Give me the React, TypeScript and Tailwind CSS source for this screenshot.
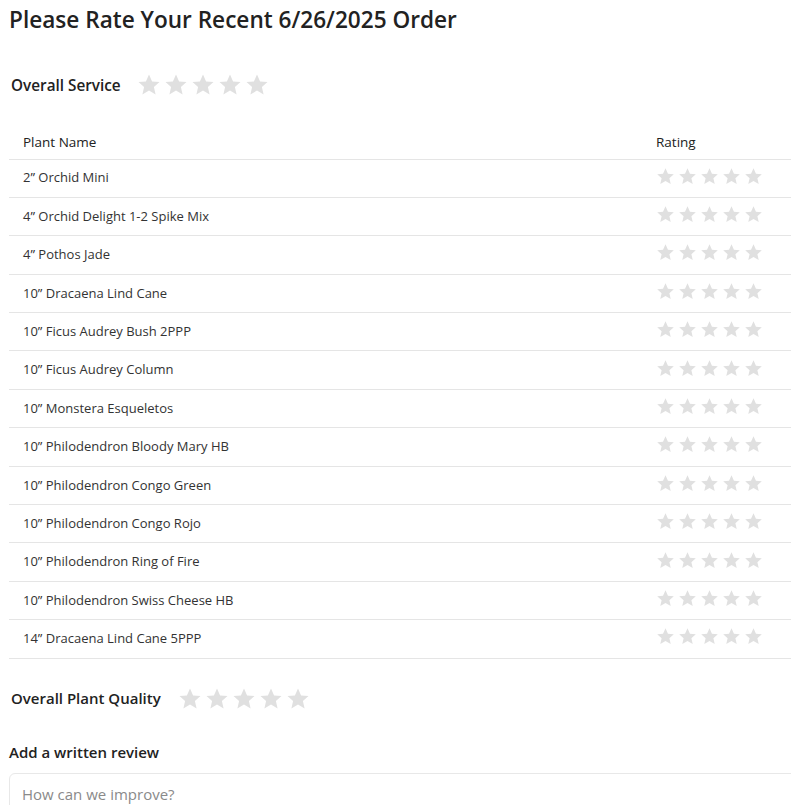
import React from "react";

const plants = [
  "2\u201D Orchid Mini",
  "4\u201D Orchid Delight 1-2 Spike Mix",
  "4\u201D Pothos Jade",
  "10\u201D Dracaena Lind Cane",
  "10\u201D Ficus Audrey Bush 2PPP",
  "10\u201D Ficus Audrey Column",
  "10\u201D Monstera Esqueletos",
  "10\u201D Philodendron Bloody Mary HB",
  "10\u201D Philodendron Congo Green",
  "10\u201D Philodendron Congo Rojo",
  "10\u201D Philodendron Ring of Fire",
  "10\u201D Philodendron Swiss Cheese HB",
  "14\u201D Dracaena Lind Cane 5PPP",
];

function Star({ size }: { size: number }) {
  return (
    <svg width={size} height={size} viewBox="0 0 24 24" className="block">
      <path
        d="M12 1.5l3.1 6.9 7.4.7-5.6 5 1.7 7.4L12 17.6l-6.6 3.9 1.7-7.4-5.6-5 7.4-.7z"
        fill="#e0e0e0"
      />
    </svg>
  );
}

export default function App() {
  return (
    <div
      className="bg-white text-[#222] pl-[9px] overflow-hidden w-[791px] h-[805px]"
      style={{ fontFamily: "'Open Sans', 'Liberation Sans', sans-serif" }}
    >
      <h1 className="text-[22.6px] font-semibold leading-[32px] pt-[4px] text-[#222]">
        Please Rate Your Recent 6/26/2025 Order
      </h1>

      <div className="flex items-center mt-[34px] pl-[2px] h-[30px]">
        <span className="text-[15.3px] font-semibold w-[126px]">Overall Service</span>
        <div className="flex gap-[3px]">
          {[0, 1, 2, 3, 4].map((i) => (
            <Star key={i} size={24} />
          ))}
        </div>
      </div>

      <table className="w-[782px] mt-[28px] border-collapse text-[13px]">
        <thead>
          <tr className="border-b border-[#e5e5e5]">
            <th className="text-left font-medium pl-[14px] h-[31px] pb-[2px] align-middle text-[13.5px]">Plant Name</th>
            <th className="text-left font-medium w-[135px] h-[31px] pb-[2px] align-middle text-[13.5px]">Rating</th>
          </tr>
        </thead>
        <tbody>
          {plants.map((p) => (
            <tr key={p} className="border-b border-[#e5e5e5] h-[38.4px]">
              <td className="pl-[14px] align-middle text-[#333]">{p}</td>
              <td className="align-middle">
                <div className="flex gap-[3px] -mt-[4px]">
                  {[0, 1, 2, 3, 4].map((i) => (
                    <Star key={i} size={19} />
                  ))}
                </div>
              </td>
            </tr>
          ))}
        </tbody>
      </table>

      <div className="flex items-center mt-[25px] pl-[2px] h-[30px]">
        <span className="text-[15px] font-semibold w-[167px]">Overall Plant Quality</span>
        <div className="flex gap-[3px]">
          {[0, 1, 2, 3, 4].map((i) => (
            <Star key={i} size={24} />
          ))}
        </div>
      </div>

      <div className="text-[15px] font-semibold mt-[27px] leading-[22px]">Add a written review</div>

      <div className="mt-[10px] border border-[#e8e8e8] rounded-tl-[6px] h-[60px] w-[800px] pl-[12px] pt-[8px]">
        <span className="text-[15px] text-[#8a8a8a]">How can we improve?</span>
      </div>
    </div>
  );
}
